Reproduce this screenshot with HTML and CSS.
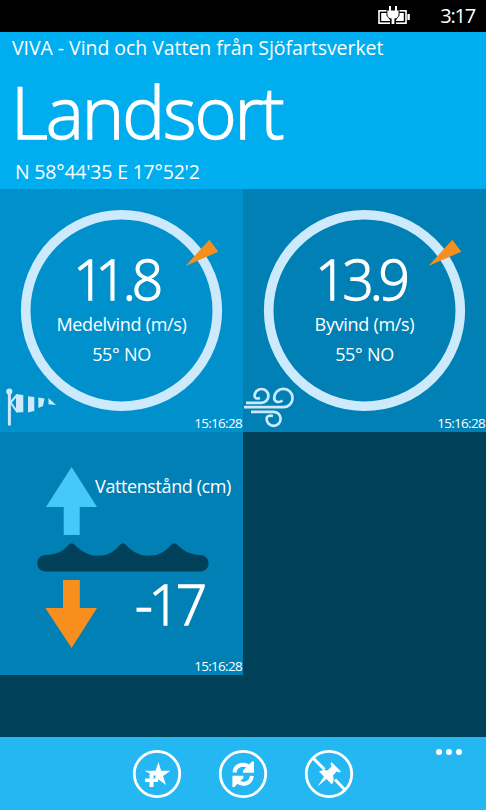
FILE: index.html
```html
<!DOCTYPE html>
<html lang="sv">
<head>
  <meta charset="UTF-8" />
  <meta name="viewport" content="width=device-width, initial-scale=1.0"/>
  <title>VIVA - Landsort</title>
  <link rel="stylesheet" href="styles.css">
</head>

<body>

  <div class="status-bar">
    <svg class="battery" width="34" height="22" viewBox="0 0 34 22">
      <rect x="1" y="5.8" width="27" height="12.4" fill="none" stroke="#fff" stroke-width="1.6"/>
      <rect x="3.2" y="8" width="22.6" height="8" fill="#fff"/>
      <rect x="29.4" y="9" width="2.4" height="6" fill="#fff"/>
      <path d="M8.5 4h13v6.5l-3.5 4.5v4h-6v-4l-3.5-4.5z" fill="#000"/>
      <path d="M11 1h2v4.4h4V1h2v4.4h1.6v3.8c0 2.4-1.8 4-4.2 4.4v5.4h-2.8v-5.4C11.2 13.2 9.4 11.6 9.4 9.2V5.4H11z" fill="#fff"/>
    </svg>
    <span class="clock">3:17</span>
  </div>

  <header class="header">
    <div class="app-title">VIVA - Vind och Vatten från Sjöfartsverket</div>
    <h1 class="station">Landsort</h1>
    <div class="position">N 58°44'35 E 17°52'2</div>
  </header>

  <main class="tiles">
    <section class="tile tile-mean">
      <svg class="dial" width="243" height="243" viewBox="0 0 243 243">
        <circle cx="121.5" cy="121.5" r="95.8" fill="none" stroke="#cceafb" stroke-width="9.6"/>
        <path d="M185.5 77L209.3 50.7L218.3 62.7z" fill="#f78f1e"/>
      </svg>
      <div class="value value-mean"><span class="tight">1</span>1.8</div>
      <div class="label">Medelvind (m/s)</div>
      <div class="label">55° NO</div>
      <!-- Windsock -->
      <svg class="tile-icon" width="60" height="50" viewBox="0 0 60 50" fill="#cceafb">
        <circle cx="9.3" cy="9.5" r="3.1"/>
        <rect x="7.9" y="10" width="3" height="33.5"/>
        <path d="M10.5 20.5L17 13M10.5 20.5L17 29.500" stroke="#cceafb" stroke-width="2"/>
        <path d="M16 12L23.3 13V30.3L16 30.5z"/>
        <path d="M28 14.3L34.3 15V29L28 30.5z"/>
        <path d="M38.3 15.6L44.5 16.5L43 24L38.3 26z"/>
        <path d="M48.5 16L56 23L48.5 22.3z"/>
      </svg>
      <div class="time">15:16:28</div>
    </section>

    <section class="tile tile-gust">
      <svg class="dial" width="243" height="243" viewBox="0 0 243 243">
        <circle cx="121.5" cy="121.5" r="95.8" fill="none" stroke="#cceafb" stroke-width="9.6"/>
        <path d="M185.5 77L209.3 50.7L218.3 62.7z" fill="#f78f1e"/>
      </svg>
      <div class="value">13.9</div>
      <div class="label">Byvind (m/s)</div>
      <div class="label">55° NO</div>
      <!-- Gusts -->
      <svg class="tile-icon" width="60" height="50" viewBox="0 0 60 50" fill="none" stroke="#cceafb" stroke-width="2.7">
        <path d="M3 20.8H18.500A6.900 6.900 0 1 0 11.600 13.900C11.600 16.500 14 17 17 16"/>
        <path d="M1 25.200H40.500A9.200 9.200 0 1 0 31.200 16C31.200 19.500 35.500 21.500 39.500 18.500"/>
        <path d="M8 29.800H30.500A7 7 0 1 1 23.600 36.800C23.600 33.800 26.500 33 30 34"/>
      </svg>
      <div class="time">15:16:28</div>
    </section>

    <section class="tile tile-water">
      <svg class="dial" width="243" height="243" viewBox="0 -1 243 243">
        <path d="M71.6 34L97 74H79.7V102H63.7V74H46z" fill="#45c8fa"/>
        <path d="M46 138.5C34.5 138.5 34.5 122 46 122C57 121.5 63 118 67.5 113Q71.7 107.5 76 113C89 126 108 126 119 113Q123 107.5 127 113C139 126 159 126 170 113Q174 107.5 178.5 113C184 118 190 121.5 200 122C211.5 122.5 211.5 138.5 200 138.5z" fill="#004058"/>
        <path d="M63 147H79.8V175H97L71.6 215L45.3 175H63z" fill="#f78f1e"/>
      </svg>
      <div class="label label-water">Vattenstånd (cm)</div>
      <div class="value value-water">-17</div>
      <div class="time">15:16:28</div>
    </section>
  </main>

  <footer class="app-bar">
    <button class="bar-button">
      <svg width="50" height="50" viewBox="0 0 50 50">
        <circle cx="25" cy="25" r="22.7" fill="none" stroke="#fff" stroke-width="2.8"/>
        <path d="M26.500 13l2.700 8.700h9.300l-7.500 5.300 3 9-7.500-5.500-3 2v-6h-6l1-1.500-6-3.300h11z" fill="#fff"/>
        <path d="M17.500 25.500h4v4h4.500v3.400H21.500v5h-4v-5h-4.500v-3.400h4.500z" fill="#fff"/>
      </svg>
    </button>
    <button class="bar-button">
      <svg width="50" height="50" viewBox="0 0 50 50">
        <circle cx="25" cy="25" r="22.7" fill="none" stroke="#fff" stroke-width="2.8"/>
        <g id="arrow">
          <path d="M16.5 23.5C17.5 14.5 27 14 31.5 18.5" fill="none" stroke="#fff" stroke-width="4"/>
          <path d="M36 12.5V23.7H25V21.5L34 12.5z" fill="#fff"/>
        </g>
        <use href="#arrow" transform="rotate(180 25.2 25.2)"/>
      </svg>
    </button>
    <button class="bar-button">
      <svg width="50" height="50" viewBox="0 0 50 50">
        <circle cx="25" cy="25" r="22.7" fill="none" stroke="#fff" stroke-width="2.8"/>
        <path d="M9 9L20.5 20.5M31 30.5L41 41" stroke="#fff" stroke-width="3"/>
        <path d="M27.5 13L37 22.5L35 23.5L32.5 22.5L29 26.5Q30.5 31.5 28 35.5L22.5 30L13.5 37.5L20 27.5L15 22.5Q19 20 23.5 21.5L27.5 17.5L26.5 15z" fill="#fff"/>
      </svg>
    </button>
    <div class="more"><span></span><span></span><span></span></div>
  </footer>

</body>
</html>
```
FILE: styles.css
```css
* {
  margin: 0;
  padding: 0;
  box-sizing: border-box;
}

body {
  display: flex;
  flex-direction: column;
  height: 810px;
  overflow: hidden;
  background-color: #004058;
  color: #fff;
  font-family: 'Open Sans', 'Noto Sans', sans-serif;
}

.status-bar {
  display: flex;
  justify-content: flex-end;
  height: 32px;
  padding-right: 11px;
  background-color: #000;
}

.battery {
  margin: 5px 28px 0 0;
}

.clock {
  font-size: 20px;
  line-height: 32px;
  letter-spacing: -1.2px;
}

.header {
  height: 157px;
  background-color: #00aeef;
}

.app-title {
  padding-left: 12px;
  font-size: 19.5px;
  line-height: 31px;
  letter-spacing: -0.05px;
}

.station {
  padding-left: 11px;
  font-size: 72px;
  font-weight: 300;
  line-height: 97px;
  letter-spacing: -2.1px;
  -webkit-text-stroke: 1.3px #fff;
}

.position {
  padding-left: 15px;
  font-size: 19.5px;
  line-height: 24px;
  letter-spacing: -0.2px;
}

.tiles {
  display: grid;
  grid-template-columns: 243px 243px;
  grid-auto-rows: 243px;
  flex: 1;
}

.tile {
  position: relative;
  padding-top: 60px;
  text-align: center;
  background-color: #0080b4;
}

.tile-mean {
  background-color: #0091cd;
}

/* Graphics sit behind the readings */
.dial {
  position: absolute;
  top: 0;
  left: 0;
}

.tile-icon {
  position: absolute;
  left: 0;
  bottom: 0;
}

.value {
  position: relative;
  padding-right: 8px;
  font-size: 55px;
  font-weight: 300;
  line-height: 60px;
  letter-spacing: -4.2px;
  -webkit-text-stroke: 1.3px #fff;
}

.value-mean {
  padding-right: 11px;
}

.tight {
  letter-spacing: -9px;
}

.label {
  position: relative;
  font-size: 18px;
  line-height: 30px;
  letter-spacing: -0.3px;
}

.time {
  position: absolute;
  right: 1px;
  bottom: 0;
  font-size: 13.5px;
  line-height: 17px;
  letter-spacing: -0.7px;
}

.tile-water {
  padding-top: 39px;
}

.label-water {
  padding-right: 12px;
  text-align: right;
  letter-spacing: -0.4px;
}

.value-water {
  padding: 73px 40px 0 0;
  text-align: right;
}

.app-bar {
  position: relative;
  display: flex;
  justify-content: center;
  gap: 36px;
  height: 73px;
  padding: 12px 0 0;
  background-color: #24b7f1;
}

.bar-button {
  width: 50px;
  height: 50px;
  background: none;
  border: none;
  cursor: pointer;
}

.more {
  position: absolute;
  top: 12px;
  right: 24px;
  display: flex;
  gap: 4px;
}

.more span {
  width: 6px;
  height: 6px;
  border-radius: 50%;
  background-color: #fff;
}
```
